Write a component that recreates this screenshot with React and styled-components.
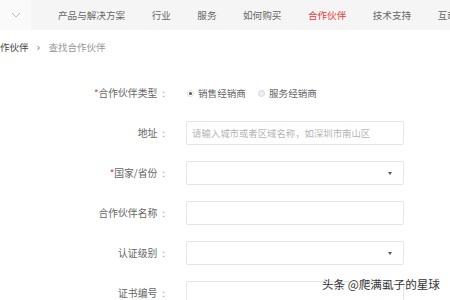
import React from "react";
import styled, { createGlobalStyle } from "styled-components";

const Global = createGlobalStyle`
  html, body { margin: 0; padding: 0; background: #fff; }
  body {
    font-family: "Noto Sans CJK SC", "Noto Sans", sans-serif;
    width: 450px; height: 300px; overflow: hidden;
  }
`;

const Page = styled.div`
  position: relative;
  width: 450px;
  height: 300px;
  overflow: hidden;
  background: #fff;
`;

const NavBar = styled.div`
  display: flex;
  align-items: center;
  height: 30px;
  background: #f5f5f5;
  white-space: nowrap;
`;

const MenuToggle = styled.div`
  width: 31px;
  height: 30px;
  background: #fafafa;
  display: flex;
  align-items: center;
  justify-content: center;
  flex: none;
`;

const NavList = styled.div`
  display: flex;
  gap: 26.5px;
  padding-left: 27px;
`;

const NavItem = styled.span`
  font-size: 9.6px;
  color: ${(p) => (p.$active ? "#e8383d" : "#666")};
  line-height: 30px;
`;

const Crumbs = styled.div`
  display: flex;
  align-items: center;
  height: 34px;
  margin-left: -9.5px;
  font-size: 9.5px;
  gap: 8px;
  white-space: nowrap;
`;

const CrumbLink = styled.span`
  color: ${(p) => (p.$current ? "#999" : "#444")};
`;

const Sep = styled.span`
  color: #777;
  font-size: 10px;
  font-family: "DejaVu Sans", sans-serif;
`;

const Form = styled.div`
  display: grid;
  grid-template-columns: 167px 218px;
  column-gap: 19px;
  row-gap: 16px;
  margin-top: 17px;
`;

const Label = styled.div`
  height: 24px;
  display: flex;
  align-items: center;
  justify-content: flex-end;
  font-size: 9.8px;
  color: #666;
  white-space: nowrap;
`;

const Star = styled.span`
  color: #e8383d;
`;

const Colon = styled.span`
  color: #888;
  margin-left: 5px;
  margin-right: 2px;
`;

const Field = styled.div`
  box-sizing: border-box;
  height: 24px;
  border: 1px solid #e6e6e6;
  border-radius: 2px;
  background: #fff;
  display: flex;
  align-items: center;
  padding: 0 6px 0 5px;
  font-size: 9.4px;
  color: #b5b5b5;
  white-space: nowrap;
  overflow: hidden;
`;

const Caret = styled.span`
  margin-left: auto;
  margin-right: 5px;
  width: 0;
  height: 0;
  border-left: 2.5px solid transparent;
  border-right: 2.5px solid transparent;
  border-top: 3px solid #555;
`;

const RadioGroup = styled.div`
  height: 24px;
  display: flex;
  align-items: center;
  gap: 12px;
  padding-left: 1px;
`;

const RadioOption = styled.label`
  display: flex;
  align-items: center;
  gap: 4px;
  font-size: 9.6px;
  color: #666;
`;

const RadioDot = styled.span`
  box-sizing: border-box;
  width: 7px;
  height: 7px;
  border-radius: 50%;
  border: 1px solid ${(p) => (p.$checked ? "#ddd" : "#d6d6d6")};
  background: ${(p) => (p.$checked ? "#fff" : "#eee")};
  display: flex;
  align-items: center;
  justify-content: center;
  &::after {
    content: "";
    width: 3px;
    height: 3px;
    border-radius: 50%;
    background: ${(p) => (p.$checked ? "#555" : "transparent")};
  }
`;

const Watermark = styled.div`
  position: absolute;
  left: 322px;
  top: 276px;
  font-size: 11.6px;
  color: #333;
  white-space: nowrap;
  text-shadow: 0 0 2px #fff, 0 0 2px #fff;
`;

const navItems = ["产品与解决方案", "行业", "服务", "如何购买", "合作伙伴", "技术支持", "互动"];

function Row({ label, required, children }) {
  return (
    <>
      <Label>
        {required && <Star>*</Star>}
        {label}
        <Colon>:</Colon>
      </Label>
      {children}
    </>
  );
}

export default function App() {
  return (
    <Page>
      <Global />
      <NavBar>
        <MenuToggle>
          <svg width="10" height="6" viewBox="0 0 10 6">
            <path d="M1 1 L5 5 L9 1" fill="none" stroke="#bbb" strokeWidth="1" />
          </svg>
        </MenuToggle>
        <NavList>
          {navItems.map((n) => (
            <NavItem key={n} $active={n === "合作伙伴"}>
              {n}
            </NavItem>
          ))}
        </NavList>
      </NavBar>
      <Crumbs>
        <CrumbLink>合作伙伴</CrumbLink>
        <Sep>›</Sep>
        <CrumbLink $current>查找合作伙伴</CrumbLink>
      </Crumbs>
      <Form>
        <Row label="合作伙伴类型" required>
          <RadioGroup>
            <RadioOption>
              <RadioDot $checked />
              销售经销商
            </RadioOption>
            <RadioOption>
              <RadioDot />
              服务经销商
            </RadioOption>
          </RadioGroup>
        </Row>
        <Row label="地址">
          <Field>请输入城市或者区域名称，如深圳市南山区</Field>
        </Row>
        <Row label="国家/省份" required>
          <Field>
            <Caret />
          </Field>
        </Row>
        <Row label="合作伙伴名称">
          <Field />
        </Row>
        <Row label="认证级别">
          <Field>
            <Caret />
          </Field>
        </Row>
        <Row label="证书编号">
          <Field />
        </Row>
      </Form>
      <Watermark>头条 @爬满虱子的星球</Watermark>
    </Page>
  );
}
